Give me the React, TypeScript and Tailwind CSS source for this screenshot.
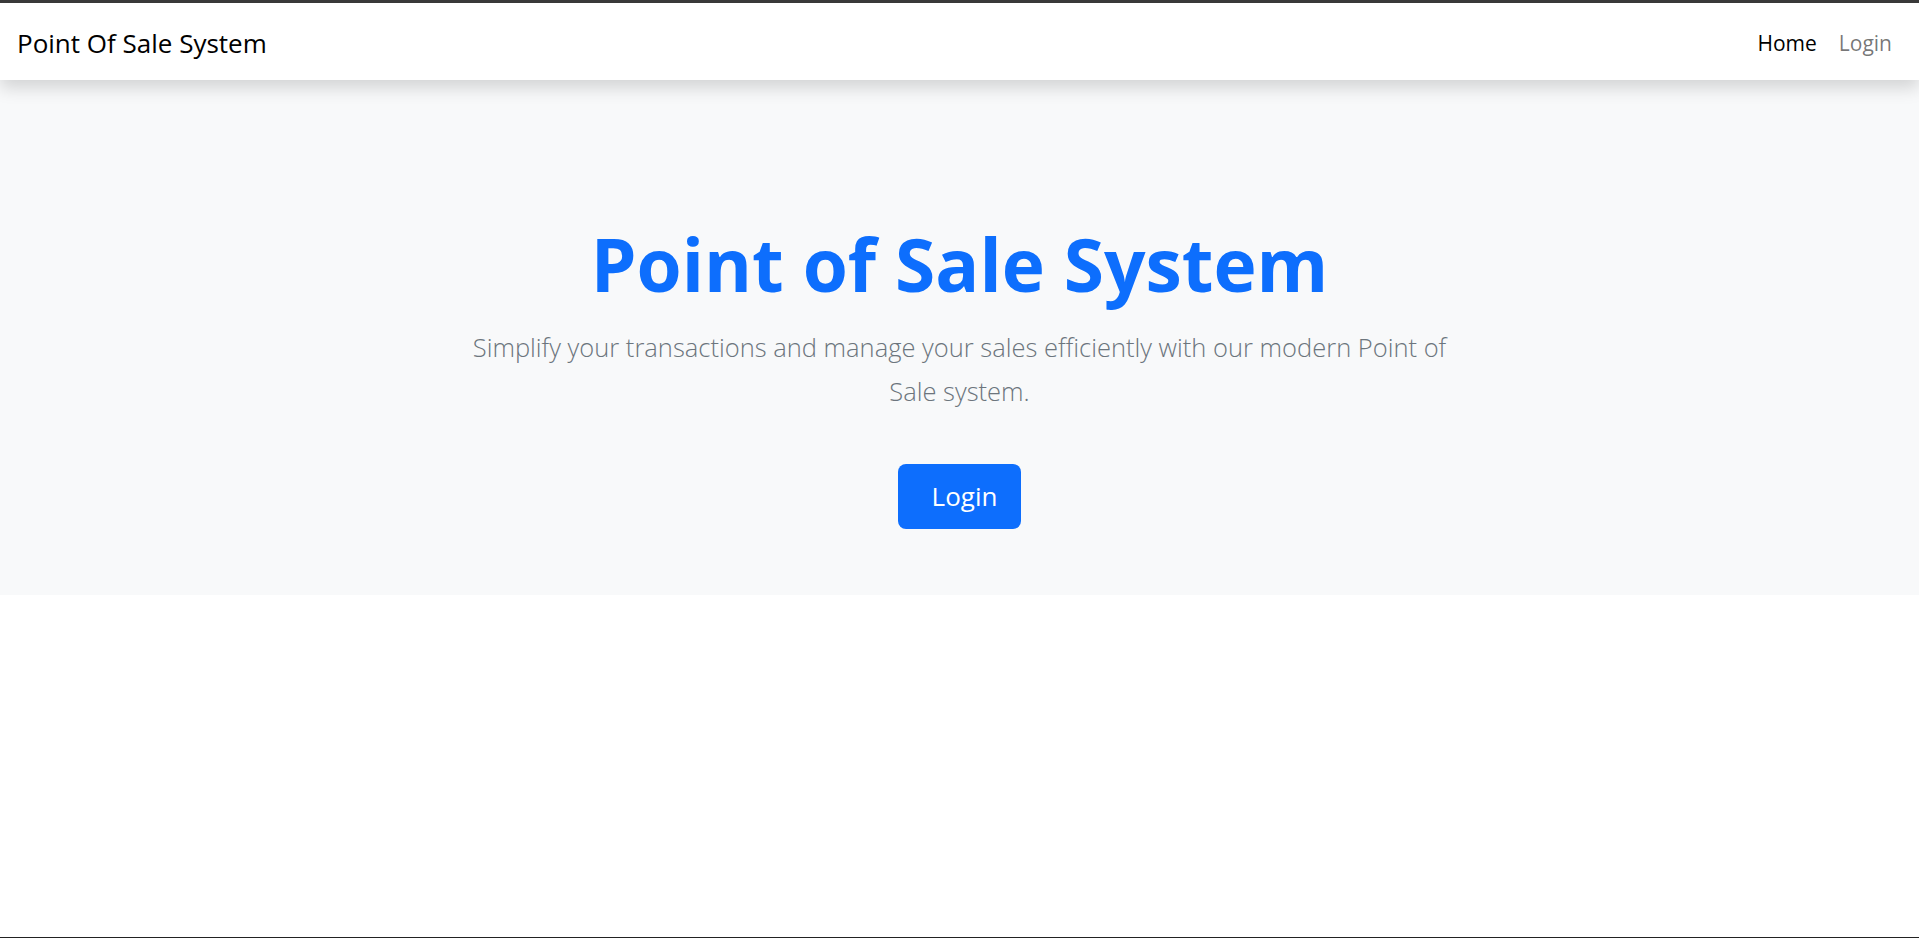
import React from 'react';

const font = { fontFamily: '"Open Sans", "Noto Sans", sans-serif' };

const Navbar: React.FC = () => {
  return (
    <nav className="relative z-10 flex h-[77px] items-center justify-between bg-white px-[17px] pt-[4px] shadow-[0_8px_16px_rgba(0,0,0,0.15)]">
      <a href="#" className="text-[26px] text-black">
        Point Of Sale System
      </a>
      <div className="flex items-center gap-[22px] pr-[10px] text-[21px]">
        <a href="#" className="text-black">
          Home
        </a>
        <a href="#" className="text-black/55">
          Login
        </a>
      </div>
    </nav>
  );
};

const Hero: React.FC = () => {
  return (
    <section className="flex h-[515px] flex-col items-center bg-[#f8f9fa] pt-[140px] text-center">
      <h1 className="text-[73px] font-bold leading-[1.2] text-[#0d6efd]">Point of Sale System</h1>
      <p className="mt-[17px] max-w-[1000px] text-[25.5px] font-light leading-[44px] text-[#6c757d]">
        Simplify your transactions and manage your sales efficiently with our modern Point of Sale system.
      </p>
      <button className="mt-[51px] h-[65px] rounded-[8px] bg-[#0d6efd] pl-[34px] pr-[24px] text-[26px] text-white">
        Login
      </button>
    </section>
  );
};

export default function App() {
  return (
    <div style={font} className="box-border flex h-screen flex-col border-t-[3px] border-b border-t-[#3a3a3a] border-b-[#222] bg-white">
      <Navbar />
      <Hero />
      <div className="flex-1" />
    </div>
  );
}
